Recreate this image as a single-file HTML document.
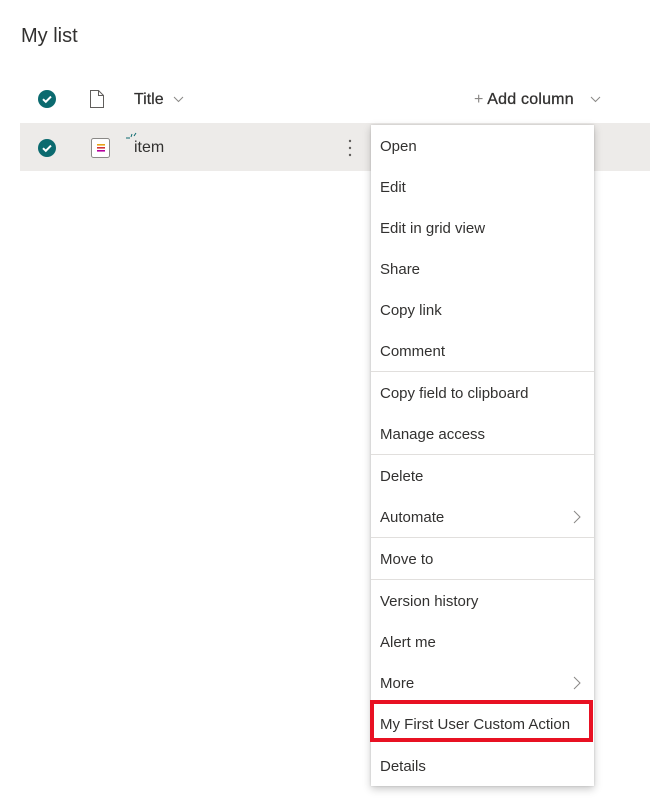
<!DOCTYPE html>
<html><head><style>
body{margin:0;width:650px;height:802px;background:#fff;font-family:"Liberation Sans",sans-serif;color:#323130;position:relative;overflow:hidden}
.a{position:absolute}
.h{left:21px;top:25px;font-size:20px;color:#323130}
.row{left:20px;top:123px;width:630px;height:48px;background:#edebe9}
.chk{width:18px;height:18px;border-radius:50%;background:#0b6a6f}
.menu{left:371px;top:125px;width:223px;height:661px;background:#fff;box-shadow:0 3px 8px rgba(0,0,0,.22),0 0 2px rgba(0,0,0,.15)}
.it{left:380px;font-size:15px;line-height:20px;color:#323130}
.dv{left:371px;width:223px;height:1px;background:#e1dfdd}
</style></head><body>
<div class="a h">My list</div>
<div class="a chk" style="left:38px;top:90px"><svg width="18" height="18"><path d="M5 9.2l2.8 2.6L13 6.6" stroke="#fff" stroke-width="2" fill="none"/></svg></div>
<svg class="a" style="left:89px;top:89px" width="16" height="20"><path d="M1.5 1.5h8l5 5v12h-13z M9.5 1.5v5h5" fill="none" stroke="#605e5c" stroke-width="1"/></svg>
<div class="a" style="left:134px;top:91px;font-size:16px;-webkit-text-stroke:0.2px #323130">Title</div>
<svg class="a" style="left:173px;top:96px" width="11" height="7"><path d="M1 1l4.5 4.5L10 1" fill="none" stroke="#8a8886"/></svg>
<div class="a" style="left:474px;top:91px;font-size:16px;-webkit-text-stroke:0.3px #323130;letter-spacing:0.2px"><span style="color:#8a8886;-webkit-text-stroke:0">+</span> Add column</div>
<svg class="a" style="left:590px;top:96px" width="11" height="7"><path d="M1 1l4.5 4.5L10 1" fill="none" stroke="#8a8886"/></svg>
<div class="a row"></div>
<div class="a chk" style="left:38px;top:139px"><svg width="18" height="18"><path d="M5 9.2l2.8 2.6L13 6.6" stroke="#fff" stroke-width="2" fill="none"/></svg></div>
<svg class="a" style="left:91px;top:138px" width="19" height="20"><rect x="0.5" y="0.5" width="18" height="19" rx="2" fill="#fff" stroke="#8a8886"/><rect x="6" y="6" width="8" height="1.6" fill="#e8a317"/><rect x="6" y="9" width="8" height="1.6" fill="#d13438"/><rect x="6" y="12" width="8" height="1.6" fill="#b4009e"/></svg>
<svg class="a" style="left:125px;top:132px" width="12" height="10"><path d="M1 6h4M6 5l1-3M9 4l2-3" stroke="#0b6a6f" stroke-width="1"/></svg>
<div class="a" style="left:134px;top:139px;font-size:16px">item</div>
<svg class="a" style="left:347px;top:139px" width="6" height="18"><circle cx="3" cy="2" r="1.2" fill="#605e5c"/><circle cx="3" cy="9" r="1.2" fill="#605e5c"/><circle cx="3" cy="16" r="1.2" fill="#605e5c"/></svg>
<div class="a menu"></div>
<div class="a it" style="top:137px">Open</div>
<div class="a it" style="top:178px">Edit</div>
<div class="a it" style="top:219px">Edit in grid view</div>
<div class="a it" style="top:260px">Share</div>
<div class="a it" style="top:301px">Copy link</div>
<div class="a it" style="top:342px">Comment</div>
<div class="a dv" style="top:371px"></div>
<div class="a it" style="top:384px">Copy field to clipboard</div>
<div class="a it" style="top:425px">Manage access</div>
<div class="a dv" style="top:454px"></div>
<div class="a it" style="top:467px">Delete</div>
<div class="a it" style="top:508px">Automate</div>
<svg class="a" style="left:573px;top:510px" width="8" height="14"><path d="M1 1l6 6-6 6" fill="none" stroke="#8a8886"/></svg>
<div class="a dv" style="top:537px"></div>
<div class="a it" style="top:550px">Move to</div>
<div class="a dv" style="top:579px"></div>
<div class="a it" style="top:592px">Version history</div>
<div class="a it" style="top:633px">Alert me</div>
<div class="a it" style="top:674px">More</div>
<svg class="a" style="left:573px;top:676px" width="8" height="14"><path d="M1 1l6 6-6 6" fill="none" stroke="#8a8886"/></svg>
<div class="a" style="left:370px;top:700px;width:215px;height:34px;border:4px solid #e81123"></div>
<div class="a it" style="top:715px">My First User Custom Action</div>
<div class="a it" style="top:757px">Details</div>
</body></html>
